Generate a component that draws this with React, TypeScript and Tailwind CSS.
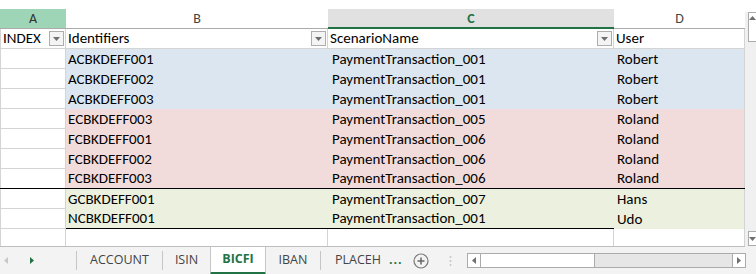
import React from "react";

type Row = { id: string; sc: string; user: string; color: string; bottom?: boolean; underBC?: boolean };

const rows: Row[] = [
  { id: "ACBKDEFF001", sc: "PaymentTransaction_001", user: "Robert", color: "bg-[#dce6f1]" },
  { id: "ACBKDEFF002", sc: "PaymentTransaction_001", user: "Robert", color: "bg-[#dce6f1]" },
  { id: "ACBKDEFF003", sc: "PaymentTransaction_001", user: "Robert", color: "bg-[#dce6f1]" },
  { id: "ECBKDEFF003", sc: "PaymentTransaction_005", user: "Roland", color: "bg-[#f2dcdb]" },
  { id: "FCBKDEFF001", sc: "PaymentTransaction_006", user: "Roland", color: "bg-[#f2dcdb]" },
  { id: "FCBKDEFF002", sc: "PaymentTransaction_006", user: "Roland", color: "bg-[#f2dcdb]" },
  { id: "FCBKDEFF003", sc: "PaymentTransaction_006", user: "Roland", color: "bg-[#f2dcdb]", bottom: true },
  { id: "GCBKDEFF001", sc: "PaymentTransaction_007", user: "Hans", color: "bg-[#ebf1de]" },
  { id: "NCBKDEFF001", sc: "PaymentTransaction_001", user: "Udo", color: "bg-[#ebf1de]", underBC: true },
];

function FilterBtn() {
  return (
    <div className="w-[15px] h-[15px] border border-[#adadad] bg-[#f4f4f4] flex items-center justify-center shrink-0">
      <svg width="7" height="4" viewBox="0 0 7 4">
        <path d="M0 0 L7 0 L3.5 4 Z" fill="#6f6f6f" />
      </svg>
    </div>
  );
}

export default function App() {
  return (
    <div className="w-[756px] h-[274px] bg-white overflow-hidden flex flex-col font-['Carlito','Lato',sans-serif] text-[15px] text-black">
      <div className="h-[9px] shrink-0" />
      <div className="flex flex-1 min-h-0">
        {/* grid */}
        <div className="w-[745px] flex flex-col">
          {/* column letters */}
          <div className="flex h-[20px] text-[14px]">
            <div className="w-[66px] bg-[#9fd5b7] border-b border-[#ababab] flex items-center justify-center text-[#333]">A</div>
            <div className="w-[262px] border-b border-[#ababab] flex items-center justify-center text-[#444]">B</div>
            <div className="w-[286px] bg-[#e1e1e1] border-b-2 border-[#217346] flex items-center justify-center text-[#217346] font-bold">C</div>
            <div className="w-[131px] border-b border-[#ababab] flex items-center justify-center text-[#444]">D</div>
          </div>
          {/* header row */}
          <div className="flex h-[20px]">
            <div className="w-[66px] border-l border-r border-b border-[#d4d4d4] flex items-center justify-between pl-[2px] pr-[1px]">
              <span>INDEX</span>
              <FilterBtn />
            </div>
            <div className="w-[262px] border-r border-b border-[#d4d4d4] flex items-center justify-between pl-[2px] pr-[1px]">
              <span>Identifiers</span>
              <FilterBtn />
            </div>
            <div className="w-[286px] border-r border-b border-[#d4d4d4] flex items-center justify-between pl-[2px] pr-[1px]">
              <span>ScenarioName</span>
              <FilterBtn />
            </div>
            <div className="w-[131px] border-r border-b border-[#d4d4d4] flex items-center pl-[2px]">
              <span>User</span>
            </div>
          </div>
          {/* data rows */}
          {rows.map((r) => (
            <div key={r.id} className={`flex h-[20px] ${r.bottom ? "border-b border-black" : ""}`}>
              <div className={`w-[66px] border-l border-r border-[#d4d4d4] ${r.bottom ? "" : "border-b"}`} />
              <div className={`w-[262px] ${r.color} flex items-center pl-[2px] ${r.underBC ? "border-b border-black" : ""}`}>{r.id}</div>
              <div className={`w-[286px] ${r.color} flex items-center pl-[4px] ${r.underBC ? "border-b border-black" : ""}`}>{r.sc}</div>
              <div className={`w-[131px] ${r.color} border-r border-[#d4d4d4] flex items-center pl-[3px]`}>{r.user}</div>
            </div>
          ))}
          {/* empty row */}
          <div className="flex flex-1 border-b border-[#bdbdbd]">
            <div className="w-[66px] border-l border-r border-[#d4d4d4]" />
            <div className="w-[262px] border-r border-[#d4d4d4]" />
            <div className="w-[286px] border-r border-[#d4d4d4]" />
            <div className="w-[131px] border-r border-[#d4d4d4]" />
          </div>
        </div>
        {/* vertical scrollbar */}
        <div className="w-[11px] flex flex-col bg-[#f0f0f0] pl-[3px]">
          <div className="h-[3px] bg-white -ml-[3px]" />
          <div className="h-[30px] bg-white border border-r-0 border-[#ababab] flex justify-center pt-[3px]">
            <svg width="7" height="4" viewBox="0 0 7 4">
              <path d="M0 4 L7 4 L3.5 0 Z" fill="#6f6f6f" />
            </svg>
          </div>
          <div className="flex-1" />
          <div className="h-[15px] bg-white border border-r-0 border-[#ababab] flex justify-center items-center">
            <svg width="7" height="4" viewBox="0 0 7 4">
              <path d="M0 0 L7 0 L3.5 4 Z" fill="#6f6f6f" />
            </svg>
          </div>
          <div className="h-[1px]" />
        </div>
      </div>
      {/* tab bar */}
      <div className="h-[27px] shrink-0 bg-[#f3f3f3] flex items-stretch text-[12.5px] text-[#444] font-['Open_Sans',sans-serif]">
        <div className="w-[76px] flex items-center pl-[4px] gap-[22px]">
          <svg width="4" height="7" viewBox="0 0 4 7">
            <path d="M4 0 L4 7 L0 3.5 Z" fill="#c8c8c8" />
          </svg>
          <svg width="4" height="7" viewBox="0 0 4 7">
            <path d="M0 0 L0 7 L4 3.5 Z" fill="#217346" />
          </svg>
        </div>
        <div className="flex items-center">
          <div className="w-px h-[19px] bg-[#c6c6c6]" />
        </div>
        <div className="w-[85px] flex items-center justify-center">ACCOUNT</div>
        <div className="flex items-center">
          <div className="w-px h-[19px] bg-[#c6c6c6]" />
        </div>
        <div className="w-[47px] flex items-center justify-center">ISIN</div>
        <div className="w-[56px] bg-white border-l border-r border-[#c6c6c6] border-b-[3px] border-b-[#217346] flex items-center justify-center font-bold text-[#217346] -mb-[1px] pb-[1px]">
          BICFI
        </div>
        <div className="w-[54px] flex items-center justify-center">IBAN</div>
        <div className="flex items-center">
          <div className="w-px h-[19px] bg-[#c6c6c6]" />
        </div>
        <div className="flex items-center pl-[14px]">PLACEH</div>
        <div className="flex items-center pl-[8px] text-[#217346] font-bold tracking-[1px]">...</div>
        <div className="flex items-center pl-[10px]">
          <svg width="16" height="16" viewBox="0 0 16 16">
            <circle cx="8" cy="8" r="7" fill="none" stroke="#777" strokeWidth="1.2" />
            <path d="M8 4.5 V11.5 M4.5 8 H11.5" stroke="#666" strokeWidth="1.5" />
          </svg>
        </div>
        <div className="flex items-center pl-[20px]">
          <svg width="3" height="12" viewBox="0 0 3 12">
            <circle cx="1.5" cy="2" r="1" fill="#c6c6c6" />
            <circle cx="1.5" cy="6" r="1" fill="#c6c6c6" />
            <circle cx="1.5" cy="10" r="1" fill="#c6c6c6" />
          </svg>
        </div>
        <div className="flex items-center pl-[15px]">
          <div className="w-[279px] h-[15px] border border-[#ababab] bg-[#e6e6e6] flex">
            <div className="w-[13px] bg-white border-r border-[#ababab] flex items-center justify-center">
              <svg width="4" height="7" viewBox="0 0 4 7">
                <path d="M4 0 L4 7 L0 3.5 Z" fill="#6f6f6f" />
              </svg>
            </div>
            <div className="w-[114px] bg-white border-r border-[#ababab]" />
            <div className="flex-1" />
            <div className="w-[13px] bg-white border-l border-[#ababab] flex items-center justify-center">
              <svg width="4" height="7" viewBox="0 0 4 7">
                <path d="M0 0 L0 7 L4 3.5 Z" fill="#6f6f6f" />
              </svg>
            </div>
          </div>
        </div>
      </div>
    </div>
  );
}
